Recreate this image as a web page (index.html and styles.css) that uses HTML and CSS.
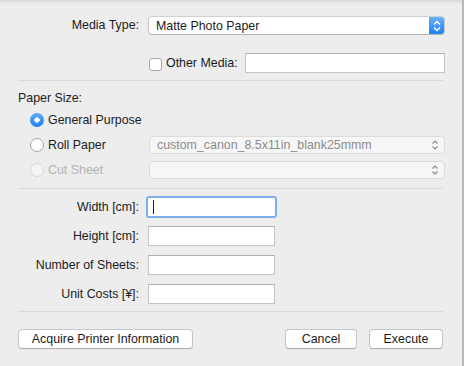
FILE: index.html
```html
<!DOCTYPE html>
<html lang="en">
<head>
  <meta charset="UTF-8" />
  <title>Media Settings</title>
  <link rel="stylesheet" href="styles.css">
</head>
<body>
  <div class="window">
    <div class="dialog">

      <!-- media type -->
      <div class="form-row media-row">
        <label class="field-label">Media Type:</label>
        <div class="popup">
          <span class="popup-text">Matte Photo Paper</span>
          <span class="stepper">
            <svg width="8" height="12" viewBox="0 0 8 12"><path d="M1 4.5 L4 1.5 L7 4.5 M1 7.5 L4 10.5 L7 7.5" fill="none" stroke="#fff" stroke-width="1.4"/></svg>
          </span>
        </div>
      </div>

      <div class="form-row other-row">
        <span></span>
        <div class="other-media">
          <span class="checkbox"></span>
          <span class="check-label">Other Media:</span>
          <span class="text-field wide"></span>
        </div>
      </div>

      <div class="separator"></div>

      <!-- paper size -->
      <div class="section-title">Paper Size:</div>
      <div class="radio-row">
        <span class="radio checked"></span>
        <span class="radio-label">General Purpose</span>
      </div>
      <div class="radio-row">
        <span class="radio"></span>
        <span class="radio-label">Roll Paper</span>
        <div class="popup small dim">
          <span class="popup-text">custom_canon_8.5x11in_blank25mmm</span>
          <svg class="arrows" width="8" height="12" viewBox="0 0 8 12"><path d="M1.5 4.5 L4 2 L6.5 4.5 M1.5 7.5 L4 10 L6.5 7.5" fill="none" stroke="#8a8a8a" stroke-width="1.1"/></svg>
        </div>
      </div>
      <div class="radio-row disabled">
        <span class="radio"></span>
        <span class="radio-label">Cut Sheet</span>
        <div class="popup small dim">
          <span class="popup-text"></span>
          <svg class="arrows" width="8" height="12" viewBox="0 0 8 12"><path d="M1.5 4.5 L4 2 L6.5 4.5 M1.5 7.5 L4 10 L6.5 7.5" fill="none" stroke="#8a8a8a" stroke-width="1.1"/></svg>
        </div>
      </div>

      <div class="separator second"></div>

      <!-- sizes -->
      <div class="fields">
        <div class="form-row field-row">
          <label class="field-label">Width [cm]:</label>
          <span class="text-field focused"><span class="caret"></span></span>
        </div>
        <div class="form-row field-row">
          <label class="field-label">Height [cm]:</label>
          <span class="text-field"></span>
        </div>
        <div class="form-row field-row">
          <label class="field-label">Number of Sheets:</label>
          <span class="text-field"></span>
        </div>
        <div class="form-row field-row">
          <label class="field-label">Unit Costs [¥]:</label>
          <span class="text-field"></span>
        </div>
      </div>

      <div class="separator third"></div>

      <div class="button-bar">
        <button class="btn acquire">Acquire Printer Information</button>
        <span class="spacer"></span>
        <button class="btn cancel">Cancel</button>
        <button class="btn execute">Execute</button>
      </div>
    </div>
  </div>
</body>
</html>
```

FILE: styles.css
```css
* {
  box-sizing: border-box;
}

body {
  margin: 0;
  padding: 0;
  font-family: "Liberation Sans", Arial, Helvetica, sans-serif;
  font-size: 12.4px;
  color: #1c1c1c;
  background-color: #ececec;
  height: 366px;
  overflow: hidden;
}

.window {
  height: 366px;
  background: linear-gradient(to bottom, #d6d6d6 0, #e9e9e9 3px, #ededed 6px, #ededed 100%);
  border-right: 2px solid #b9b9b9;
}

.dialog {
  padding: 16px 17px 0 18px;
}

.form-row {
  display: grid;
  grid-template-columns: 121px 1fr;
  column-gap: 9px;
  align-items: center;
}

.field-label {
  text-align: right;
  line-height: 15px;
}

/* popup buttons */
.popup {
  display: flex;
  align-items: center;
  height: 19px;
  background: #fff;
  border: 1px solid #c8c8c8;
  border-top-color: #d2d2d2;
  border-bottom-color: #b4b4b4;
  border-radius: 4px;
  overflow: hidden;
}

.popup-text {
  flex: 1;
  padding-left: 7px;
  white-space: nowrap;
}

.stepper {
  width: 16px;
  height: 19px;
  margin: -1px -1px -1px 0;
  border-radius: 0 4px 4px 0;
  background: linear-gradient(to bottom, #6cb3fa, #1b7ef6);
  display: flex;
  align-items: center;
  justify-content: center;
}

.popup.small {
  height: 18px;
  margin-left: auto;
  width: 296px;
}

.popup.dim {
  background: #f6f6f6;
  border-color: #dcdcdc;
  color: #8c8c8c;
}

.popup .arrows {
  margin-right: 5px;
}

/* other media row */
.other-row {
  margin-top: 18px;
}

.other-media {
  display: flex;
  align-items: center;
}

.checkbox {
  width: 13px;
  height: 13px;
  margin-left: 1px;
  margin-top: 2px;
  border: 1px solid #a8a8a8;
  border-radius: 3px;
  background: #fff;
}

.check-label {
  margin-left: 4px;
}

.text-field {
  display: block;
  height: 20px;
  width: 127px;
  background: #fff;
  border: 1px solid #c3c3c3;
  border-top-color: #b0b0b0;
}

.text-field.wide {
  width: 200px;
  margin-left: auto;
}

.text-field.focused {
  width: 131px;
  height: 22px;
  margin: -1px 0 -1px -2px;
  border: 2px solid #7fb0ee;
  border-radius: 3px;
  padding: 2px 0 0 5px;
}

.caret {
  display: block;
  width: 1px;
  height: 14px;
  background: #222;
}

.separator {
  height: 1px;
  background: #dadada;
  margin-top: 7px;
  margin-right: 2px;
}

/* paper size */
.section-title {
  margin-top: 10px;
  line-height: 15px;
}

.radio-row {
  display: flex;
  align-items: center;
  height: 25px;
  padding-left: 12px;
}

.section-title + .radio-row {
  margin-top: 1px;
}

.radio {
  width: 14px;
  height: 14px;
  border-radius: 50%;
  border: 1px solid #a5a5a5;
  background: #fff;
  flex: none;
}

.radio.checked {
  border: none;
  background: radial-gradient(circle, #fff 0, #fff 2.4px, transparent 3px), linear-gradient(to bottom, #5daaf9, #1c7ff6);
}

.radio-label {
  margin-left: 4px;
  white-space: nowrap;
}

.radio-row.disabled .radio {
  border-color: #d6d6d6;
  background: #f4f4f4;
}

.radio-row.disabled .radio-label {
  color: #b2b2b2;
}

.separator.second {
  margin-top: 6px;
}

/* size fields */
.fields {
  margin-top: 8px;
  display: flex;
  flex-direction: column;
  gap: 9px;
}

.field-row {
  height: 20px;
}

.separator.third {
  margin-top: 7px;
}

/* buttons */
.button-bar {
  display: flex;
  margin-top: 17px;
  gap: 12px;
  margin-right: 2px;
}

.spacer {
  flex: 1;
}

.btn {
  font-family: inherit;
  font-size: 12.4px;
  color: #1c1c1c;
  height: 20px;
  padding: 0;
  background: #fff;
  border: 1px solid #c6c6c6;
  border-bottom-color: #aeaeae;
  border-radius: 4px;
  box-shadow: 0 0.5px 0 rgba(0, 0, 0, 0.05);
}

.btn.acquire {
  width: 175px;
}

.btn.cancel {
  width: 72px;
}

.btn.execute {
  width: 74px;
}
```
